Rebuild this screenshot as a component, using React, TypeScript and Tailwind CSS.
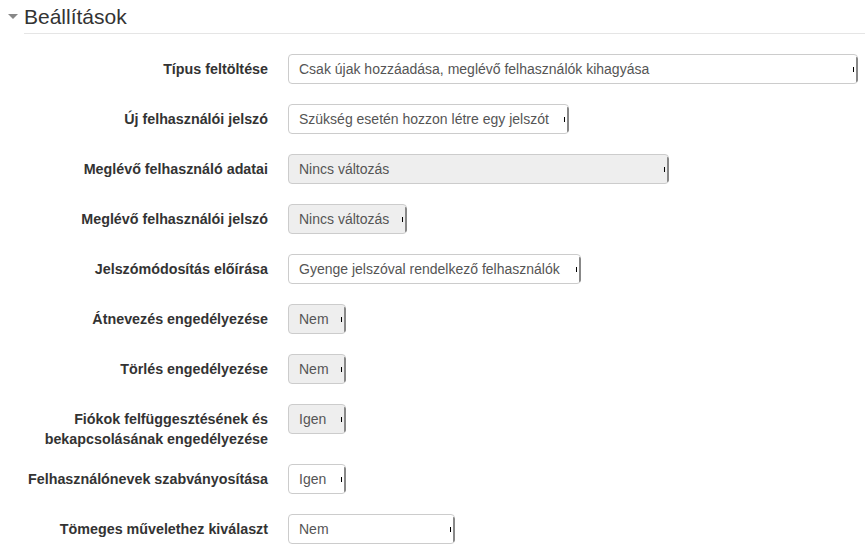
import React from 'react';

type Row = {
  label: React.ReactNode;
  value: string;
  width: string;
  disabled?: boolean;
  tall?: boolean;
};

const rows: Row[] = [
  { label: 'Típus feltöltése', value: 'Csak újak hozzáadása, meglévő felhasználók kihagyása', width: 'w-[570px]' },
  { label: 'Új felhasználói jelszó', value: 'Szükség esetén hozzon létre egy jelszót', width: 'w-[281px]' },
  { label: 'Meglévő felhasználó adatai', value: 'Nincs változás', width: 'w-[381px]', disabled: true },
  { label: 'Meglévő felhasználói jelszó', value: 'Nincs változás', width: 'w-[119px]', disabled: true },
  { label: 'Jelszómódosítás előírása', value: 'Gyenge jelszóval rendelkező felhasználók', width: 'w-[293px]' },
  { label: 'Átnevezés engedélyezése', value: 'Nem', width: 'w-[58px]', disabled: true },
  { label: 'Törlés engedélyezése', value: 'Nem', width: 'w-[58px]', disabled: true },
  {
    label: (
      <>
        Fiókok felfüggesztésének és
        <br />
        bekapcsolásának engedélyezése
      </>
    ),
    value: 'Igen',
    width: 'w-[58px]',
    disabled: true,
    tall: true,
  },
  { label: 'Felhasználónevek szabványosítása', value: 'Igen', width: 'w-[58px]' },
  { label: 'Tömeges művelethez kiválaszt', value: 'Nem', width: 'w-[167px]' },
];

const FakeSelect: React.FC<{ value: string; width: string; disabled?: boolean }> = ({ value, width, disabled }) => (
  <div
    className={`${width} h-[30px] flex items-center rounded-[4px] border border-[#ccc] ${
      disabled ? 'bg-[#eeeeee]' : 'bg-white'
    }`}
  >
    <span className="flex-1 pl-[10px] text-[14px] text-[#555] whitespace-nowrap overflow-hidden">{value}</span>
    <div className="relative h-full w-[6px] flex items-center justify-end">
      <div className="w-[1px] h-[5px] bg-black mr-[3px]" />
      <div className="absolute right-[-1px] top-[2px] bottom-[1px] w-[2px] bg-[#888] rounded-r-[2px]" />
    </div>
  </div>
);

const App: React.FC = () => {
  return (
    <div className="w-[865px] h-[553px] overflow-hidden bg-white font-['Liberation_Sans',Arial,sans-serif] text-[#333]">
      <div className="flex items-center pl-[8px] pt-[4px] h-[28px]">
        <span className="inline-block w-0 h-0 border-l-[5px] border-r-[5px] border-t-[5px] border-l-transparent border-r-transparent border-t-[#888] mr-[6px] mt-[1px]" />
        <h2 className="text-[21px] leading-none text-[#333]">Beállítások</h2>
      </div>
      <div className="ml-[24px] mt-[5px] border-b border-[#e5e5e5]" />
      <div className="pt-[20px]">
        {rows.map((r, i) => (
          <div key={i} className={`flex items-start ${r.tall ? 'pb-[15px]' : 'pb-[20px]'}`}>
            <div className="w-[268px] shrink-0 pt-[5px] text-right text-[14.3px] leading-5 font-bold">{r.label}</div>
            <div className="ml-[20px]">
              <FakeSelect value={r.value} width={r.width} disabled={r.disabled} />
            </div>
          </div>
        ))}
      </div>
    </div>
  );
};

export default App;
